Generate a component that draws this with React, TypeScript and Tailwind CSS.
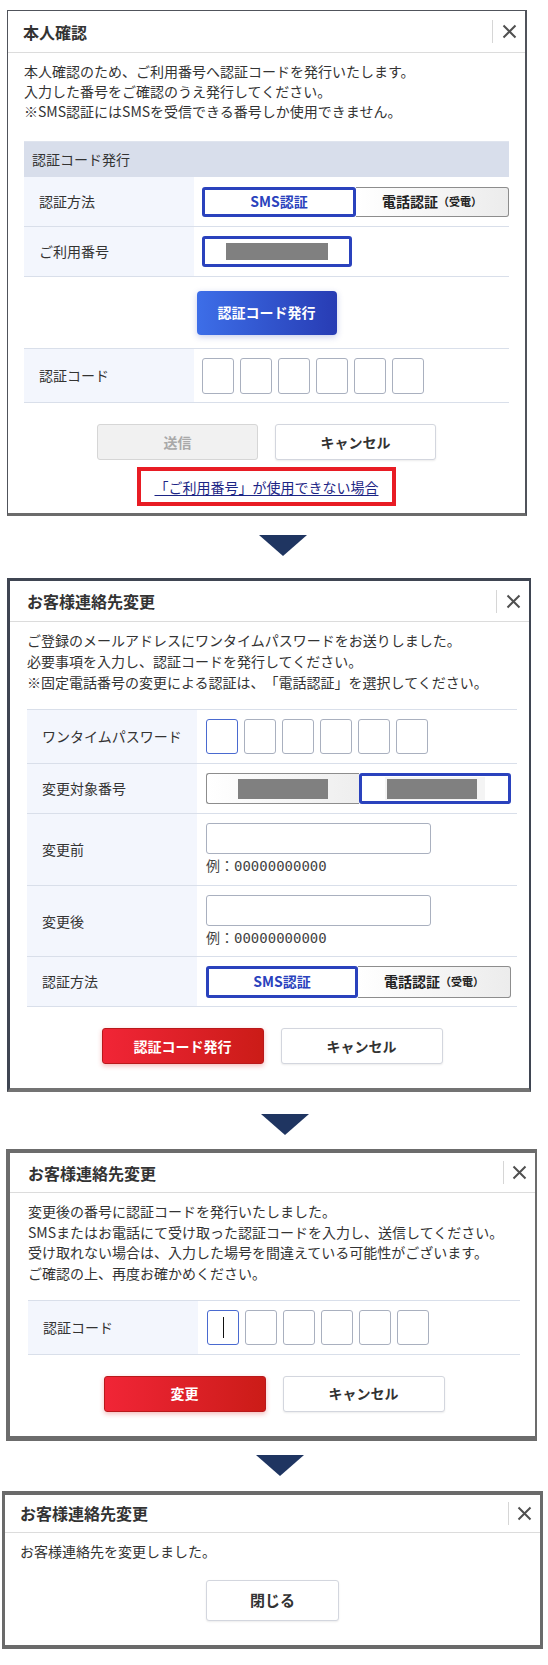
import React from "react";

const XIcon = () => (
  <svg width="15" height="15" viewBox="0 0 15 15" fill="none">
    <path d="M1.5 1.5L13.5 13.5M13.5 1.5L1.5 13.5" stroke="#505050" strokeWidth="2" />
  </svg>
);

function Arrow({ className }: { className: string }) {
  return (
    <div className={className}>
      <svg width="48" height="21" viewBox="0 0 48 21">
        <path d="M0 0H48L24 21Z" fill="#1f3561" />
      </svg>
    </div>
  );
}

function Header({ title, className, titleClass, closeClass }: { title: string; className: string; titleClass: string; closeClass: string }) {
  return (
    <div className={`flex items-center border-b border-[#dcdcdc] ${className}`}>
      <h2 className={`flex-1 text-[16px] font-bold leading-none text-[#333] ${titleClass}`}>{title}</h2>
      <div className="h-[23px] w-px bg-[#d6d6d6]" />
      <button className={`flex h-full items-center justify-center ${closeClass}`}>
        <XIcon />
      </button>
    </div>
  );
}

function CodeBoxes({ h, first }: { h: string; first?: "blue" | "cursor" }) {
  return (
    <div className="flex gap-[6px]">
      {[0, 1, 2, 3, 4, 5].map((i) => (
        <div
          key={i}
          className={`${h} flex w-[32px] items-center justify-center rounded-[3px] border bg-white ${
            i === 0 && first ? "border-[#4a6ad0]" : "border-[#a9b0bf]"
          }`}
        >
          {i === 0 && first === "cursor" && <div className="h-[21px] w-px bg-[#111]" />}
        </div>
      ))}
    </div>
  );
}

function MethodToggle({ className, smsClass }: { className: string; smsClass: string }) {
  return (
    <div className={`flex ${className}`}>
      <div className={`flex items-center justify-center rounded-[3px] border-[3px] border-[#2a42bd] bg-white text-[14px] font-bold text-[#2a42bd] ${smsClass}`}>
        SMS認証
      </div>
      <div className="flex flex-1 items-center justify-center rounded-r-[3px] border border-l-0 border-[#8d8d8d] bg-linear-to-r from-white to-[#ececec] font-bold text-[#222]">
        <span className="text-[14px]">電話認証</span>
        <span className="text-[11px]">（受電）</span>
      </div>
    </div>
  );
}

const Masked = () => <div className="h-[20px] w-[90px] bg-[#808080]" />;

function Row({ label, className, children }: { label: string; className: string; children: React.ReactNode }) {
  return (
    <div className={`flex border-b border-[#d9dfea] ${className}`}>
      <div className="flex w-[170px] shrink-0 items-center bg-[#f3f6fd] pl-[15px] text-[14px] text-[#333]">{label}</div>
      <div className="flex flex-1 items-center pl-[8px]">{children}</div>
    </div>
  );
}

function Hinted({ label }: { label: string }) {
  return (
    <div className="flex flex-col">
      <div className="h-[31px] w-[225px] rounded-[3px] border border-[#a9b0bf] bg-white" />
      <div className="mt-[2px] font-['DejaVu_Sans_Mono','Noto_Sans_CJK_JP',monospace] text-[14px] leading-[20px] text-[#444]">{label}</div>
    </div>
  );
}

export default function App() {
  return (
    <div className="w-[548px] bg-white pt-[10px] pb-[15px] font-['Noto_Sans_CJK_JP',sans-serif] text-[#333] [text-spacing-trim:space-all]">
      {/* panel 1 */}
      <div className="ml-[7px] w-[520px] border border-r-2 border-b-[3px] border-[#50535b] border-b-[#6b6b6b] bg-white">
        <Header title="本人確認" className="h-[42px]" titleClass="pl-[15px]" closeClass="w-[32px]" />
        <div className="px-[16px] pt-[8px] pb-[7px]">
          <p className="text-[14px] leading-[20px]">
            本人確認のため、ご利用番号へ認証コードを発行いたします。
            <br />
            入力した番号をご確認のうえ発行してください。
            <br />
            ※SMS認証にはSMSを受信できる番号しか使用できません。
          </p>
          <div className="mt-[20px] border-t border-[#dfe4ee]">
            <div className="flex h-[35px] items-center bg-[#d8deeb] pl-[8px] text-[14px]">認証コード発行</div>
            <Row label="認証方法" className="h-[50px]">
              <MethodToggle className="h-[30px] w-[307px]" smsClass="w-[154px]" />
            </Row>
            <Row label="ご利用番号" className="h-[50px]">
              <div className="flex h-[31px] w-[150px] items-center justify-center rounded-[3px] border-[3px] border-[#2a42bd] bg-white">
                <div className="h-[17px] w-[102px] bg-[#808080]" />
              </div>
            </Row>
            <div className="flex h-[72px] items-center justify-center border-b border-[#d9dfea]">
              <button className="h-[44px] w-[140px] rounded-[4px] bg-linear-to-r from-[#3d6ee8] to-[#283cb4] text-[14px] font-bold text-white shadow-[0_2px_6px_rgba(40,60,180,0.25)]">
                認証コード発行
              </button>
            </div>
            <Row label="認証コード" className="h-[54px]">
              <CodeBoxes h="h-[36px]" />
            </Row>
          </div>
          <div className="mt-[21px] flex justify-center gap-[17px]">
            <button className="h-[36px] w-[161px] rounded-[3px] border border-[#d6d6d6] bg-[#f1f1f1] text-[14px] font-bold text-[#a9a9a9]">送信</button>
            <button className="h-[36px] w-[161px] rounded-[3px] border border-[#d3d6de] bg-white text-[14px] font-bold text-[#333] shadow-[0_1px_2px_rgba(0,0,0,0.08)]">キャンセル</button>
          </div>
          <div className="mt-[7px] flex justify-center">
            <div className="flex h-[39px] w-[259px] items-center justify-center border-[4px] border-[#e81c24] pt-[1px]">
              <a className="text-[14px] text-[#1c2585] underline underline-offset-2">「ご利用番号」が使用できない場合</a>
            </div>
          </div>
        </div>
      </div>

      <Arrow className="mt-[19px] ml-[259px] h-[21px]" />

      {/* panel 2 */}
      <div className="mt-[22px] ml-[7px] w-[524px] border-t-[3px] border-r-2 border-b-[4px] border-l-[3px] border-[#3f4552] border-b-[#737373] bg-white">
        <Header title="お客様連絡先変更" className="h-[41px]" titleClass="pl-[17px]" closeClass="w-[32px]" />
        <div className="pt-[8px] pr-[12px] pb-[24px] pl-[17px]">
          <p className="text-[14px] leading-[21px]">
            ご登録のメールアドレスにワンタイムパスワードをお送りしました。
            <br />
            必要事項を入力し、認証コードを発行してください。
            <br />
            ※固定電話番号の変更による認証は、「電話認証」を選択してください。
          </p>
          <div className="mt-[16px] border-t border-[#d9dfea]">
            <Row label="ワンタイムパスワード" className="h-[54px]">
              <div className="pl-px">
                <CodeBoxes h="h-[35px]" first="blue" />
              </div>
            </Row>
            <Row label="変更対象番号" className="h-[50px]">
              <div className="ml-px flex h-[31px] w-[305px]">
                <div className="flex w-[153px] items-center justify-center rounded-l-[3px] border border-r-0 border-[#8d8d8d] bg-linear-to-r from-white to-[#eeeeee]">
                  <Masked />
                </div>
                <div className="flex flex-1 items-center justify-center rounded-[3px] border-[3px] border-[#2a42bd] bg-white">
                  <div className="flex h-[23px] w-[100px] items-center justify-start bg-[#f4f4f4] pl-[2px]">
                    <Masked />
                  </div>
                </div>
              </div>
            </Row>
            <Row label="変更前" className="h-[72px]">
              <div className="pl-px">
                <Hinted label="例：00000000000" />
              </div>
            </Row>
            <Row label="変更後" className="h-[71px]">
              <div className="pl-px">
                <Hinted label="例：00000000000" />
              </div>
            </Row>
            <Row label="認証方法" className="h-[50px]">
              <MethodToggle className="ml-px h-[32px] w-[305px]" smsClass="w-[152px]" />
            </Row>
          </div>
          <div className="mt-[21px] flex justify-center gap-[17px]">
            <button className="h-[36px] w-[162px] rounded-[3px] border border-[#b9191b] bg-linear-to-r from-[#f12536] to-[#cb1c17] text-[14px] font-bold text-white shadow-[0_2px_5px_rgba(220,30,30,0.3)]">
              認証コード発行
            </button>
            <button className="h-[36px] w-[162px] rounded-[3px] border border-[#d3d6de] bg-white text-[14px] font-bold text-[#333] shadow-[0_1px_2px_rgba(0,0,0,0.08)]">キャンセル</button>
          </div>
        </div>
      </div>

      <Arrow className="mt-[22px] ml-[261px] h-[21px]" />

      {/* panel 3 */}
      <div className="mt-[14px] ml-[6px] w-[531px] border-t-[4px] border-r-2 border-b-[5px] border-l-[4px] border-[#6c6c6c] bg-white">
        <Header title="お客様連絡先変更" className="h-[40px]" titleClass="pl-[18px]" closeClass="w-[31px]" />
        <div className="pt-[8px] pr-[15px] pb-[24px] pl-[18px]">
          <p className="text-[14px] leading-[20.7px]">
            変更後の番号に認証コードを発行いたしました。
            <br />
            SMSまたはお電話にて受け取った認証コードを入力し、送信してください。
            <br />
            受け取れない場合は、入力した場号を間違えている可能性がございます。
            <br />
            ご確認の上、再度お確かめください。
          </p>
          <div className="mt-[16px] border-t border-[#d9dfea]">
            <Row label="認証コード" className="h-[54px]">
              <div className="pl-px">
                <CodeBoxes h="h-[35px]" first="cursor" />
              </div>
            </Row>
          </div>
          <div className="mt-[21px] flex justify-center gap-[17px]">
            <button className="h-[36px] w-[162px] rounded-[3px] border border-[#b9191b] bg-linear-to-r from-[#f12536] to-[#cb1c17] text-[14px] font-bold text-white shadow-[0_2px_5px_rgba(220,30,30,0.3)]">
              変更
            </button>
            <button className="h-[36px] w-[162px] rounded-[3px] border border-[#d3d6de] bg-white text-[14px] font-bold text-[#333] shadow-[0_1px_2px_rgba(0,0,0,0.08)]">キャンセル</button>
          </div>
        </div>
      </div>

      <Arrow className="mt-[14px] ml-[256px] h-[21px]" />

      {/* panel 4 */}
      <div className="mt-[15px] ml-[2px] w-[541px] border-[3px] border-t-[4px] border-b-[4px] border-[#6a6a6a] bg-white">
        <Header title="お客様連絡先変更" className="h-[38px]" titleClass="pl-[15px]" closeClass="w-[31px]" />
        <div className="pt-[8px] pb-[24px] pl-[15px]">
          <p className="text-[14px] leading-[20px]">お客様連絡先を変更しました。</p>
          <div className="mt-[19px] flex justify-center pr-[15px]">
            <button className="h-[41px] w-[133px] rounded-[3px] border border-[#d3d6de] bg-white text-[15px] font-bold text-[#333] shadow-[0_1px_2px_rgba(0,0,0,0.08)]">閉じる</button>
          </div>
        </div>
      </div>
    </div>
  );
}
